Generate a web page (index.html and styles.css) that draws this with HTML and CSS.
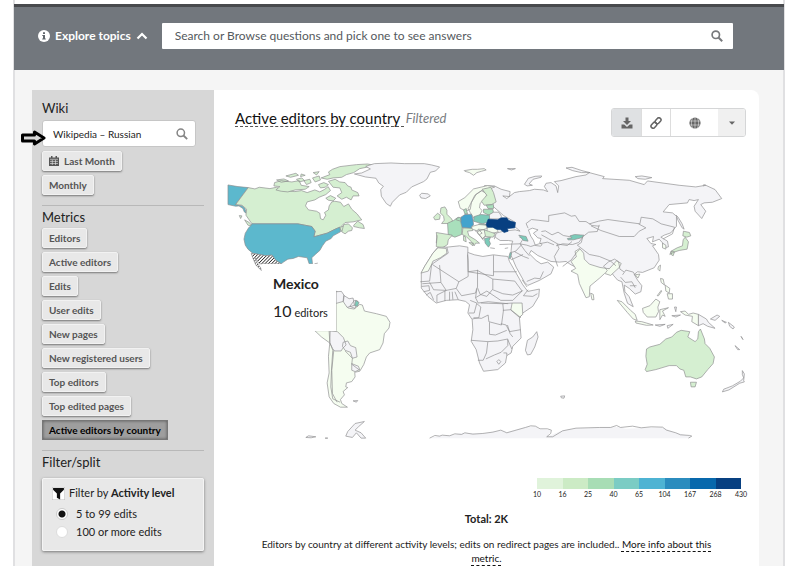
FILE: index.html
```html
<!DOCTYPE html>
<html lang="en">
<head>
<meta charset="utf-8">
<title>Active editors by country</title>
<link rel="stylesheet" href="styles.css">
</head>
<body>
<div class="page">
  <header class="topbar">
    <button class="explore" type="button">
      <svg class="info" viewBox="0 0 12 12"><circle cx="6" cy="6" r="6" fill="#fff"/><path d="M5 2.3h2v1.6H5zM4.3 5H7v3.6h.8v1H4.2v-1H5V6h-.7z" fill="#60666c"/></svg>
      Explore topics
      <svg class="chevron" viewBox="0 0 12 8"><path d="M1.5 6.5 6 2l4.500 4.500" fill="none" stroke="#fff" stroke-width="2.200"/></svg>
    </button>
    <div class="search">
      <input type="text" aria-label="Search topics" placeholder="Search or Browse questions and pick one to see answers">
      <svg class="lens" viewBox="0 0 12 12"><circle cx="4.800" cy="4.800" r="3.700" fill="none" stroke="currentColor" stroke-width="1.700"/><path d="m7.500 7.500 3.700 3.700" stroke="currentColor" stroke-width="2"/></svg>
    </div>
  </header>

  <div class="content">
    <aside class="sidebar">
      <section class="group">
        <h2><label for="wiki">Wiki</label></h2>
        <div class="wiki">
          <input id="wiki" type="text" value="Wikipedia – Russian">
          <svg class="lens" viewBox="0 0 12 12"><circle cx="4.800" cy="4.800" r="3.700" fill="none" stroke="currentColor" stroke-width="1.500"/><path d="m7.500 7.500 3.700 3.700" stroke="currentColor" stroke-width="1.800"/></svg>
          <svg class="arrow" viewBox="0 0 26 16"><path d="M1.500 5h12V2l9.500 6-9.500 6v-3h-12z" fill="#d8d8d8" stroke="#000" stroke-width="3" stroke-linejoin="round"/></svg>
        </div>
        <div class="buttons">
          <button class="btn" type="button"><svg class="cal" viewBox="0 0 10 10"><path d="M0 1.500h2V0h1.500v1.500h3V0H8v1.500h2V10H0z" fill="#555"/><path d="M1 3.300h8M1 5.400h8M1 7.500h8M3.300 3.800V9M6.500 3.800V9" stroke="#e8e8e8" stroke-width=".6"/></svg>Last Month</button>
          <button class="btn" type="button">Monthly</button>
        </div>
      </section>
      <section class="group">
        <h2>Metrics</h2>
        <div class="buttons">
          <button class="btn" type="button">Editors</button>
          <button class="btn" type="button">Active editors</button>
          <button class="btn" type="button">Edits</button>
          <button class="btn" type="button">User edits</button>
          <button class="btn" type="button">New pages</button>
          <button class="btn" type="button">New registered users</button>
          <button class="btn" type="button">Top editors</button>
          <button class="btn" type="button">Top edited pages</button>
          <button class="btn active" type="button">Active editors by country</button>
        </div>
      </section>
      <section class="group">
        <h2>Filter/split</h2>
        <fieldset class="filter">
          <div class="filter-title"><svg class="funnel" viewBox="0 0 12 12"><path d="M0 0h12v12H0z" fill="#fff" stroke="#bbb"/><path d="M1 1h10v1.500L7.500 6v5.500l-3-1.500V6L1 2.500z" fill="#111"/></svg><span>Filter by <b>Activity level</b></span></div>
          <label><input type="radio" name="level" checked>5 to 99 edits</label>
          <label><input type="radio" name="level">100 or more edits</label>
        </fieldset>
      </section>
    </aside>

    <main class="detail">
      <div class="heading">
        <h1><a href="#">Active editors by country&nbsp;</a> <em>Filtered</em></h1>
        <div class="tools">
          <button class="tool on" type="button" aria-label="Download"><svg viewBox="0 0 12 12"><path d="M4.500.5h3V4H10L6 8 2 4h2.500zM.5 7.500h2.700L6 10l2.800-2.500h2.700v4H.5z" fill="currentColor"/></svg></button>
          <button class="tool" type="button" aria-label="Permalink"><svg viewBox="0 0 12 12"><g fill="none" stroke="currentColor" stroke-width="1.500"><rect x="4.800" y="1.700" width="6.600" height="4.200" rx="2.100" transform="rotate(-48 8.100 3.800)"/><rect x=".6" y="6.100" width="6.600" height="4.200" rx="2.100" transform="rotate(-48 3.900 8.200)"/></g></svg></button>
          <button class="tool wide" type="button" aria-label="Map chart"><svg viewBox="0 0 12 12"><circle cx="6" cy="6" r="5.600" fill="currentColor"/><path d="M.5 4h11M.5 8h11M6 .5v11M3.500 1C2 4 2 8 3.500 11M8.500 1C10 4 10 8 8.500 11" fill="none" stroke="#fff" stroke-width=".5"/></svg></button>
          <button class="tool more" type="button" aria-label="Chart types"><svg viewBox="0 0 12 12"><path d="M3 4.500h6L6 7.700z" fill="currentColor"/></svg></button>
        </div>
      </div>

      <div class="map">
        <svg class="world" viewBox="-18 0 1638 900" role="img" aria-label="World map of active editors">
          <defs>
            <pattern id="hatch" width="7" height="7" patternUnits="userSpaceOnUse" patternTransform="rotate(45)"><path d="M0 0h7v7H0z" fill="#fff"/><path d="M1 0v7" stroke="#222" stroke-width="2.500"/></pattern>
          </defs>
          <g class="land">
            <!-- North America -->
            <path class="c5" d="M24 105l30 5 31 3-38 51 20 4 8 8 4 14-6-4-4-10-12-8-10 1-23-5z"/>
            <path class="c2" d="M85 113L105 117 118 112 150 116 170 112 190 122 225 125 245 122 262 128 285 120 300 126 315 118 325 110 332 122 318 134 298 142 285 150 262 156 257 168 266 180 290 184 300 190 302 206 310 210 318 196 314 188 326 180 328 168 336 156 345 154 362 157 372 170 386 162 396 178 412 192 426 210 400 216 376 218 362 232 374 228 380 240 364 244 360 232 346 238 322 250 300 256 282 261 286 244 276 230 255 226 234 222H96L78 196 80 178 66 166 47 164z"/>
            <path class="c2" d="M164 98l20-6 14 2 18 2 22-4 6 14 24 4-12 8-30 2-22 6-20-2-16-4 12-10-18-2zM170 90l22-3 14 6-22 4zM198 78l30-8 8 6-24 6zM230 88l16-4 8 8-16 4zM244 72l12 4-14 4zM252 92l8 12 14-6-4-10zM280 68l18-3-8 10zM278 84l20-6 4 12-16 6zM304 84L330 74 326 66 338 58 360 50 410 44 444 42 462 46 440 52 420 56 402 68 380 74 366 82 340 84 322 88zM326 94L346 88 360 96 376 98 384 108 394 112 396 120 414 128 418 138 400 138 394 150 380 142 366 148 352 138 366 128 360 114 340 112zM296 104l16-6 14 6-10 8-14 2zM318 145l14-8 16 8-8 8-14-2zM74 210l14 8 8 10-12-2zM58 197l8 1-4 8zM402 226l12-12 16 10 4 12-14-2-18-4zM366 246l6-22 14-2 12 12-2 8-10 2-10 8z"/>
            <path class="c5" d="M96 222H234L255 226 276 230 286 244 282 261 300 256 322 250 346 238 360 232 362 246 340 258 334 266 318 274 308 288 300 302 284 316 276 324 278 342H268L262 324 236 320 220 326 204 328 192 336 184 342 168 332 156 316 138 318 118 314 98 310 84 298 76 286 72 268 76 250 86 234 92 228z"/>
            <path class="hatched" d="M94 311L118 314 138 318 156 316 168 332 184 342H118L104 322 110 338 122 354 124 362 108 346 100 328z"/>
            <path d="M404 72l22-3 26-12-14-8 26-8 50-2 40 2 60 0 22 4 24 6-12 12-16 4-10 20-10 8-36 16-16 16-20 8-22 22-6 12-12-8-15-22-2-20 8-10-14-10-8-14-32-4zM600 136l6-6 20 2 6 6-14 8-14-2z"/>
            <path class="line" d="M284 342l10-2"/>
            <!-- South America -->
            <path class="c1" d="M349 424L358 430 372 450 385 475 403 478 420 464 428 466 434 484 470 492 500 500 511 518 508 535 494 552 490 580 480 600 450 610 440 622 432 645 420 665 405 668 406 682 396 696 380 700 378 712 384 714 370 726 374 736 362 750 366 762 383 773 362 773 342 762 328 742 322 700 328 670 326 620 330 580 305 562 285 543H349z"/>
            <path d="M349 426l16-1 8 12-2 18-22 6zM372 437l16 10 12-2 4 22-22 6-12-18zM404 452l10 2-8 22-16-6zM331 544l22 2 18 18 8 22-10 10-5 8-20 0-6-8-8-16zM370 578l14-4 8 14 16 6 4 28-14 4-6-18-16-6-8-12zM396 642l20 8 4 10-14 6-10-4z"/>
            <path class="c4" d="M408 452l10 6-5 12-8-2z"/>
            <path class="line" d="M328 544l2 34 9 24-4 60-2 50 6 36 22 10M342 602l-6 60 2 70 14 26M376 604l22 22-2 18 24 18"/>
            <path d="M400 754l14-1-4 5zM258 864l8-5 22 3-14 3zM316 866l8 0zM378 860l6-14 22-24 28-6-18 16-10 10 18 8 14 16-14 0-14-16-12 14z"/>
          </g>
          <g class="land" transform="translate(600)">
            <!-- Eurasia -->
            <path d="M225 108l20 10 27 7-2 15-20-2 12 8 23-18 15-3 30-3 15-4 27 2 13 5-10-15 5-10 15-2 15 10 5 20 3-20-13-13 20-3 15-4 30-8 30-5 10-7 45 12-5 6 80 5 45 13 10-11 95 13 50 5 30-5 28 13 20 27-28 11-25 2-10 5 15 20-12 22-20-22-3-15 13-20-13 3-15-3-5 10-55 5-18 22 28 3 12 10v30l-17 20-20 7-10 6 20 12 3 17-12 3-6-15-10-11-20 8 3-16-20 6 12 15 15 3-10 4 18 26 2 17-15 23-35 14-15-2-10 8 10 17 13 17-3 18-17 7-18-17-15-10 2 20 13 15 12 30-17-10-10-30-7-35-13-5-13-15-12-20-15 8-15 2-28 24-2 32-10 3-20-43-5-27-20-10-15-10-20 2-25-2-40-18-20-15-5 10 20 20 15 10 20-5 18 15-8 20-35 20-35 15-10-10-25-45-15-35 0-15 2-20 3-8-13-2-25 0-15-10 3-12 22-6 35-4 15 4-20-17 5-10-35-20-45-40-20-10 8-40z"/>
            <path class="c1" d="M455 335l16-14-4-16 14-9 12 14 2 18 15 15 32 10 28 4 22-24 14 8-6 12-26 24-18-6-15 14-29 24-2 32-10 3-20-43-5-27-20-10 14-8z"/>
            <path class="white" d="M327 240l12-5 17 5-14 10 13 14 10 2-4 14 7 4-4 5-16-2-6-16-8-12z"/>
            <path class="line" d="M326 235l-6-14 16-12 20 2 32 4 0-18 48-8 20 10 12-2 12 18 20 0 18 12 22 2M540 225l-6 20-26 2-18 14-36 0-22-4-16-10-18 8-20-12-12 2M366 255l22 12 28 16 28 4 14-12M410 288l20-6 30 2 18-6 14-18M405 320l14-24-6-14M405 320l10 30M430 350l26-20 16-22 10-10M490 262l-4 16-12 8 36 28 30 6 34 14 16 14M225 268l-5-46M240 284l62-2 10-16-12-4M302 282l20 4 12 4 25-8 25-5 20 8M302 282l14 20 14 16M275 308l14-4 18-20M286 306l26 14 16 6M275 330l36-16M322 395l24-10 16 2 10-22M308 390l15 22M510 222l28-8 28-5 36 5 60 8 4-20 35 5 25 15 40 10-6 20-28 15M515 228l30 14 55 18 45 0 15-16 20-10-22-12M552 350l16-14 18-8 12 8 4 22 12 8M554 350l10 12-6 8M610 375l10-14 22 6 6 10M604 382l14 16 20-2 10 18M632 408l20 0"/>
            <path class="c4" d="M452 258l14-4 28 2-8 8-24 6-16 0-2-4 14-2zM298 256l22 4 6 14-14-2zM272 308l4 2-4 18-4-6z"/>
            <path class="c2" d="M793 244l18 4 4 10-12 4-12-4zM798 262l10 14-4 22-24 4-18 6-10 6 4-10 18-10 16-6 2-18zM756 304l10 2-4 12-6-4z"/>
            <path d="M771 196l6 6 12 20 6 16-6-4-12-22zM648 80l20-2 30 5-20 5-22-2zM854 104l6 2-8 2zM440 54l18-2 30 10 24 6-26 0-26-6zM315 103l12-18 20-6 20-1-2 4-24 6-12 14 10 4-16 2zM264 56l24 0-12 4z"/>
            <path class="c1" d="M134 62l24-4 16 0 20-2 6 4-14 4-14 4-10 8-12-8-14-4zM730 280l10 6 0 12-10-4zM718 350l6-4-2 18-6-6zM648 375l14-2-6 12zM724 386l8 2 4 18-10-8zM738 406l14 10-2 14-10-6zM744 432l16 0 0 16-12 0zM514 430l8 4 2 16-6 0zM714 438l12-16 2 2-10 14z"/>
            <!-- Europe -->
            <path class="c1" d="M116 155l20-12 26-26 42-10 22 4-10 4-24 4-22 14-14 24-4 22-14 4-16-8zM146 176l8-16 12-24 20-14 16 10-4 14-16 14-2 14 8 8-10 18-14 6-12-18z"/>
            <path class="c2" d="M188 118l26-6 8 16 8 28-14 8-22 2-8-12 16-18z"/>
            <path class="c3" d="M200 166l22-2 0 12-16 0zM192 178l28 0 2 10-14 8-16-8z"/>
            <path d="M222 187l16 0 8 12-4 8-32 0-8-8z"/>
            <path class="c2" d="M64 174l12-3 6 10 0 12 14 14 4 8-14 6-20 0 8-10-2-12-10-10zM62 196l-2 12-14 2-4-8 12-12z"/>
            <path class="c3" d="M84 220l18-8 14-10 16 12-4 18-2 22-20 8-20-8z"/>
            <path class="c2" d="M50 248l48 8-12 14-2 14-18 12-16-6 2-28zM130 234l28 0 2 8-16 2 4 14 20 12 12 10-12 0-4 8-10-14-14-14-12-6zM148 278l14 2-2 8zM132 258l6 4 2 14-8-4z"/>
            <path class="c5 b" d="M124 202l12-8 20-1 4 14 2 16-6 12-28-2-4-14z"/>
            <path class="c4" d="M164 200l20-6 26 2 0 20-22 6-26-8zM195 266l18-4-4 10 4 10-6 10-10-12z"/>
            <path class="c3" d="M110 206l12-4 2 12-14-4zM132 180l8-4 4 16-8 0zM178 222l24 2-6 8-20 0z"/>
            <path class="c1" d="M156 230l22-6 22 2 2 10-26 8-18-6zM176 238l20 2 4 14-10 14-16-18zM204 232l28 0 4 14-24 6-10-8z"/>
            <path class="c2" d="M194 240l12 4 22 8-8 10-22-2z"/>
            <path class="c8" d="M206 208l28 2 12-6 16 0 6 8 20 6-2 16-22 2 2 8-12 4-10-8-14-2-10-6-16 0-4-8z"/>
            <path class="line" d="M52 256l-2 24M166 242l8 6 10 12 8 12M178 240l10 10-8 4M188 266l10-6M212 294l14 2M256 296l10-2"/>
            <!-- Africa -->
            <path d="M55 292h27l38-4 25 4v16l20 7 25 5 32-5 23 3 20 2 5 15 20 35 20 35 15 20 35-7-2 22-18 30-30 20-10 15 3 35 2 25-25 25-5 20-13 8-4 22-23 20-43 5-12-25-10-40-15-25 5-35-2-30-13-20 5-25-12-10-23-5-35 2-30 8-25-20-20-25v-45l10-20 25-40z"/>
            <path class="c1" d="M55 294l25 2 2 14-20 14-22 10-4 10-10 20-22 6 12-22 24-38zM278 460h30l2 34-10 9-26-22z"/>
            <path class="line" d="M82 292l4 18-50 34M38 344l80 52 28-16-2-66M36 344l-6 50-28 2M60 346l4 52-56 4M144 308l2 24 0 34 76 12v-62M222 366h70M146 366l28-4 46 26v30l-18 22-20-6-8-20 0-54M118 396l-8 20-30 6-16-24M110 416l16 22M80 422l-28 14 0 22M30 398l12 22 38 2M76 424v30M90 426v26M98 426l2 24M106 426l10 24M126 438l42-8 4-16M220 388l66 6 22 30-28 12-30-4-30-12M172 418l-4 26 34-20 42 28 36 0 30-30M168 444l8 16 30-4 60 6M152 452l20 8-8 30-16 0M172 462l12 10-6 32-20 4M184 460l66 2 2 20-6 44-38-10-2-20-20 10-24-2M250 462l28-2M250 482l24-2 30 24M304 540l-34 6-10-20-16-4M210 518v36l18 2 34-14M155 572l50 4 30-2M205 576l-4 34-10 22-16 0M235 574l30-6 0 20-20 20-20 8-26 12M252 610l10 0 0 8M265 570l12 28M326 420l-14 18 28 2 14-8M264 526l8 26 8 10M232 636l6-6 6 6-6 8zM6 410l22-2 2 14-18 4M20 436l12-8 10 22"/>
            <path d="M352 546l4 16-10 30-12 22-10 2-6-14 6-30 16-10zM424 740l12-1-2 7-8-1z"/>
            <!-- Antarctica -->
            <path class="noline" d="M30 866L60 858 90 857 130 850 190 852 220 846 244 842 262 848 320 832 348 830 362 840 396 842 382 862 430 842 470 836 540 834 592 832 620 838 696 834 730 834 770 850 816 860 810 866z"/>
            <path class="line" d="M30 866L46 858 60 860 68 857 90 859 106 853 126 855 136 850 160 854 190 852 220 848 244 842 262 850 290 842 318 834 334 829 348 830 362 838 384 838 396 842 394 852 382 862 400 862 430 844 470 836 540 834 574 834 592 828 604 834 640 830 666 835 696 832 730 833 742 842 770 850 784 856 812 858 818 860 808 866"/>
          </g>
          <g class="land" transform="translate(1110 420)">
            <!-- Oceania -->
            <path class="c1" d="M84 32l14 4 26 26 14 12 6 18-12-4-18-20zM138 94l20 2 34 10-20 1-32-7zM160 56l22-8 18-20 12 8-6 16 2 14-8 16-26 0-12-14zM212 60l26-6-18 10 8 16-8-4-8 14zM274 66l14-2 10 10 14-4 16 4 0 34-20-12 2-16-22-4z"/>
            <path d="M328 74l24 14 6 10 20 18-22-6-14-8-14 6zM198 106l30-2-16 6zM234 108l18-4-16 12zM248 78l26-2-14 6zM256 52l6 0-2 14zM364 88l20-12 8 4-14 12zM398 92l14 6-4 2zM418 98l18 14-4 6-10-8zM456 140l6 10zM438 168l14 12-6 0z"/>
            <path class="c2" d="M172 178L182 172 212 164 230 148 248 142 262 128 276 122 302 126 296 142 318 156 326 148 328 126 334 118 346 148 348 162 362 176 376 202 372 222 356 240 338 262 322 268 304 262 290 262 284 242 272 238 262 228 240 228 200 240 172 246 168 240 174 224 170 200zM304 278l18 0-4 14-12 0z"/>
            <path d="M460 243l6 10-2 20 2 4-14 4-32 20-20 6 4-8 26-10 24-14 10-10-4-10z"/>
          </g>
        </svg>
        <div class="tooltip"><strong>Mexico</strong><span><big>10</big> editors</span></div>
      </div>

      <ul class="legend">
        <li class="s1"><span>10</span></li><li class="s2"><span>16</span></li><li class="s3"><span>25</span></li><li class="s4"><span>40</span></li><li class="s5"><span>65</span></li><li class="s6"><span>104</span></li><li class="s7"><span>167</span></li><li class="s8"><span>268</span></li><li class="end"><span>430</span></li>
      </ul>
      <p class="total">Total: 2K</p>
      <p class="note">Editors by country at different activity levels; edits on redirect pages are included.. <a href="#">More info about this metric.</a></p>
    </main>
  </div>
</div>
</body>
</html>
```

FILE: styles.css
```css
* { box-sizing: border-box; }
body { margin: 0; background: #fff; color: #222; font: 12px/16px Lato, sans-serif; }
button, input { font-family: inherit; color: inherit; }
h1, h2, p, ul { margin: 0; padding: 0; font-weight: normal; }
svg { display: block; flex: none; }

.page { display: flex; flex-direction: column; min-height: 100vh; margin: 0 15px 0 13px; padding-top: 4px; border: solid #e0e0e2; border-width: 0 2px; }
.topbar { display: flex; align-items: center; gap: 14px; height: 66px; margin: 0 -1px; padding: 0 51px 6px 24px; background: #72777d; border-top: 3px solid #484a4d; }
.explore { display: flex; align-items: center; gap: 5px; border: 0; background: none; padding: 0; color: #fff; font-size: 12px; font-weight: bold; }
.info { width: 12px; height: 12px; }
.chevron { width: 12px; height: 8px; }
.search { flex: 1; display: flex; align-items: center; height: 26px; padding: 0 10px 0 13px; background: #fff; border-radius: 1px; color: #77797c; }
.search input { flex: 1; min-width: 0; border: 0; padding: 0; outline: 0; background: none; font-size: 12px; }
.search input::placeholder { color: #54595d; opacity: 1; }
.lens { width: 12px; height: 12px; }

.content { flex: 1; display: flex; padding: 20px 24px 0 17px; background: #f5f5f5; }
.sidebar { width: 182px; flex: none; padding: 10px; background: #d7d7d7; }
.group + .group { border-top: 1px solid #b8b8b8; margin-top: 10px; padding-top: 3px; }
.group h2 { font-size: 13px; line-height: 16px; color: #222; }
.wiki { position: relative; display: flex; align-items: center; width: 154px; height: 27px; margin: 4px 0; padding: 0 7px 0 10px; background: #fff; border: 1px solid #c6c6c6; border-radius: 3px; color: #858585; }
.wiki input { flex: 1; min-width: 0; border: 0; padding: 0; outline: 0; background: none; font-size: 10px; color: #222; }
.arrow { position: absolute; left: -22px; top: 9px; width: 26px; height: 16px; }
.buttons { display: flex; flex-direction: column; align-items: flex-start; gap: 4px; }
.group h2 + .buttons { margin-top: 3px; }
.btn { display: flex; align-items: center; gap: 5px; height: 20px; padding: 0 6px; border: 1px solid #f2f2f2; border-radius: 2px; background: #e8e8e8; box-shadow: 0 1px 2px #777; color: #555; font-size: 10px; font-weight: bold; }
.cal { width: 10px; height: 10px; }
.btn.active { background: #9e9e9e; border-color: #777; border-radius: 0; color: #000; box-shadow: inset 0 0 3px #555; }
.filter { margin: 8px 0 0; padding: 7px 9px; min-width: 0; height: 73px; border: 1px solid #f4f4f4; border-radius: 2px; background: #e8e8e8; box-shadow: 0 1px 3px #777; font-size: 11px; line-height: 14px; }
.filter-title { display: flex; align-items: center; gap: 4px; margin-bottom: 5px; }
.funnel { width: 13px; height: 13px; }
.filter label { display: flex; align-items: center; gap: 8px; height: 18px; padding-left: 4px; }
.filter input { appearance: none; width: 12px; height: 12px; margin: 0; border: 1px solid #ddd; border-radius: 50%; background: #fff; }
.filter input:checked { background: radial-gradient(circle, #111 0 3px, #fff 4px); border-color: #ccc; }

.detail { flex: 1; min-width: 0; background: #fff; border-radius: 0 8px 0 0; }
.heading { display: flex; justify-content: space-between; align-items: flex-start; height: 60px; padding: 18px 13px 0 21px; }
.heading h1 { display: flex; gap: 2px; font-size: 15px; line-height: 20px; color: #222; }
.heading a { color: #111; text-decoration: none; border-bottom: 1px dashed #555; height: 19px; }
.heading em { color: #777b80; font-size: 13px; }
.tools { display: flex; height: 29px; border: 1px solid #d5d6d7; border-radius: 3px; overflow: hidden; }
.tool { display: flex; align-items: center; justify-content: center; width: 29px; padding: 0; border: 0; background: #fff; color: #666; }
.tool + .tool { border-left: 1px solid #ddd; }
.tool svg { width: 12px; height: 12px; }
.tool.on { background: #dfe1e3; }
.tool.wide { width: 48px; }
.tool + .tool.more { width: 27px; background: #f0f0f0; border-left: 0; }

.map { position: relative; }
.world { width: 100%; height: auto; }
.land path { fill: #f4f4f7; stroke: #8c8c8e; stroke-width: 2; stroke-linejoin: round; }
.land .line { fill: none; }
.land .noline { stroke: none; }
.land .white { fill: #fff; }
.land .hatched { fill: url(#hatch); }
.land .c1 { fill: #f5fdf0; }
.land .c2 { fill: #d5efd1; }
.land .c3 { fill: #a9dfbc; }
.land .c4 { fill: #7bcbb9; }
.land .c5 { fill: #5cb8cd; }
.land .b { fill: #43a3cd; }
.land .c8 { fill: #084081; stroke: #084081; }
.tooltip { position: absolute; left: 48px; top: 114px; width: 74px; height: 67px; padding: 11px 0 0 11px; background: #fff; white-space: nowrap; font-size: 11px; line-height: 18px; }
.tooltip strong { display: block; margin-bottom: 9px; font-size: 14px; }
.tooltip big { font-size: 16px; }

.legend { display: flex; width: 204px; height: 32px; margin: 29px 18px 0 auto; list-style: none; }
.legend li { flex: 1; height: 11px; padding-top: 11px; font-size: 7px; line-height: 8px; color: #222; }
.legend li.end { flex: none; width: 0; }
.legend span { display: block; width: 20px; margin: 1px 0 0 -10px; text-align: center; }
.s1 { background: #e0f3db; } .s2 { background: #ccebc5; } .s3 { background: #a8ddb5; } .s4 { background: #7bccc4; }
.s5 { background: #4eb3d3; } .s6 { background: #2b8cbe; } .s7 { background: #0868ac; } .s8 { background: #084081; }
.total { margin-top: 1px; text-align: center; font-size: 11px; font-weight: bold; line-height: 16px; }
.note { margin: 10px 36px 0; text-align: center; font-size: 10px; line-height: 14px; }
.note a { color: #111; text-decoration: underline dashed 1px; text-underline-offset: 3px; }
```
